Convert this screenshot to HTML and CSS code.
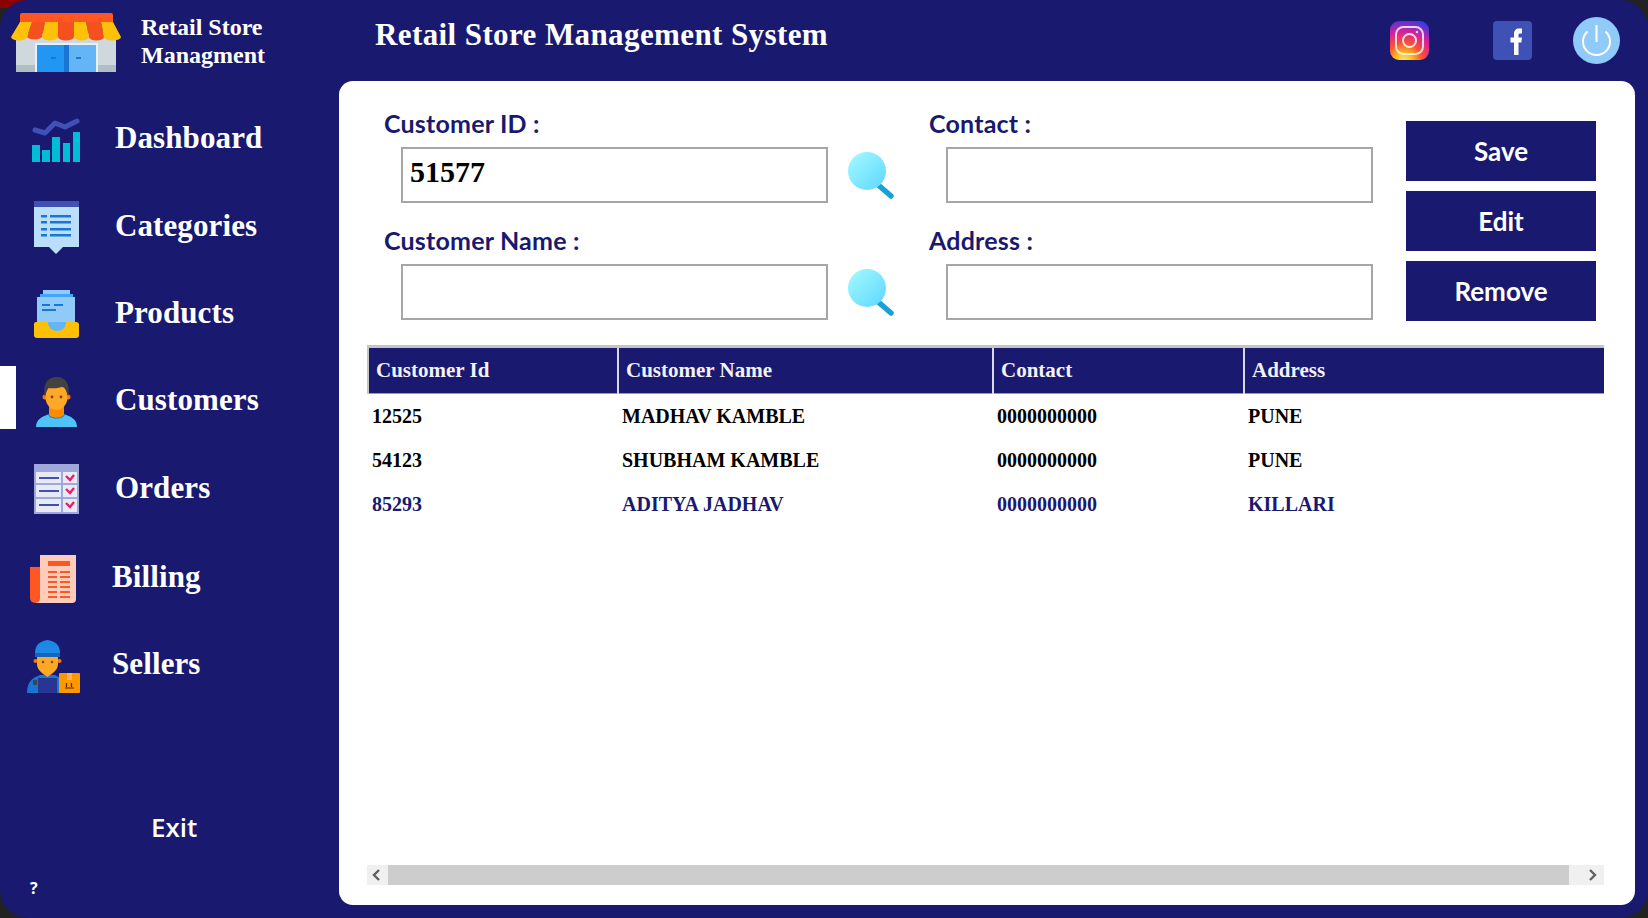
FILE: index.html
```html
<!DOCTYPE html>
<html lang="en">
<head>
  <meta charset="UTF-8" />
  <title>Retail Store Management System</title>
  <link rel="stylesheet" href="styles.css">
</head>
<body>
  <div class="app">

    <!-- SIDEBAR -->
    <aside class="sidebar">
      <div class="brand">
        <svg class="brand-logo" viewBox="0 0 110 59">
          <rect x="5" y="20" width="100" height="39" fill="#cfd8dc"/>
          <rect x="5" y="52" width="100" height="7" fill="#b0bec5"/>
          <rect x="24" y="30" width="63" height="29" fill="#e3f2fd"/>
          <rect x="26" y="32" width="27" height="27" fill="#2196f3"/>
          <rect x="53" y="32" width="32" height="27" fill="#64b5f6"/>
          <rect x="53" y="32" width="5" height="27" fill="#1976d2"/>
          <rect x="40" y="44" width="5" height="2" fill="#1976d2"/>
          <rect x="65" y="44" width="5" height="2" fill="#1976d2"/>
          <path d="M9 9 V2 a2 2 0 0 1 2-2 H100 a2 2 0 0 1 2 2 V9Z" fill="#ff5722"/>
          <path d="M21 9 L16 24 a8 3.5 0 0 0 15 0 L34 9Z" fill="#f4511e"/>
          <path d="M47 9 V24 a8 3.5 0 0 0 16 0 V9Z" fill="#f4511e"/>
          <path d="M75 9 L78 24 a7.5 3.5 0 0 0 15 0 L90 9Z" fill="#f4511e"/>
          <path d="M9 9 L0 24 a8 3.5 0 0 0 16 0 L21 9Z" fill="#ffc107"/>
          <path d="M34 9 L31 24 a8 3.5 0 0 0 16 0 V9Z" fill="#ffc107"/>
          <path d="M63 9 V24 a7.5 3.5 0 0 0 15 0 L75 9Z" fill="#ffc107"/>
          <path d="M90 9 L93 24 a8.5 3.5 0 0 0 17 0 L102 9Z" fill="#ffc107"/>
        </svg>
        <div class="brand-name">Retail Store<br>Managment</div>
      </div>

      <nav class="nav">
        <a class="nav-item">
          <svg class="nav-icon" viewBox="0 0 56 60">
            <g fill="#00bcd4">
              <rect x="4" y="37" width="8" height="17"/>
              <rect x="14" y="42" width="8" height="12"/>
              <rect x="24" y="29" width="8" height="25"/>
              <rect x="35" y="35" width="7" height="19"/>
              <rect x="45" y="24" width="7" height="30"/>
            </g>
            <polyline points="7,22 17,25 27,15 37,19 49,13" fill="none" stroke="#3f51b5" stroke-width="5" stroke-linecap="round" stroke-linejoin="round"/>
          </svg>
          <span>Dashboard</span>
        </a>
        <a class="nav-item">
          <svg class="nav-icon" viewBox="0 0 56 60">
            <path d="M6 6 H51 V52 H35 L28 59 L21 52 H6Z" fill="#bbdefb"/>
            <rect x="6" y="6" width="45" height="6" fill="#3f51b5"/>
            <g fill="#1976d2">
              <rect x="13" y="20" width="6" height="2.5"/><rect x="22" y="20" width="21" height="2.5"/>
              <rect x="13" y="26" width="6" height="2.5"/><rect x="22" y="26" width="21" height="2.5"/>
              <rect x="13" y="33" width="6" height="2.5"/><rect x="22" y="33" width="21" height="2.5"/>
              <rect x="13" y="39" width="6" height="2.5"/><rect x="22" y="39" width="21" height="2.5"/>
            </g>
          </svg>
          <span>Categories</span>
        </a>
        <a class="nav-item">
          <svg class="nav-icon" viewBox="0 0 56 60">
            <rect x="15" y="8" width="27" height="10" fill="#90caf9"/>
            <rect x="12" y="12" width="33" height="10" fill="#42a5f5"/>
            <rect x="9" y="15" width="38" height="27" fill="#90caf9"/>
            <g fill="#1976d2">
              <rect x="14" y="22" width="8" height="2"/><rect x="26" y="22" width="9" height="2"/>
              <rect x="14" y="27" width="14" height="2"/>
            </g>
            <path d="M6 42 a2 2 0 0 1 2-2 H48 a3 3 0 0 1 3 2 V53 a3 3 0 0 1-3 3 H9 a3 3 0 0 1-3-3Z" fill="#ffc107"/>
            <path d="M20 40 H38 V41 a9 8 0 0 1-18 0Z" fill="#64b5f6"/>
          </svg>
          <span>Products</span>
        </a>
        <a class="nav-item nav-item-active">
          <svg class="nav-icon" viewBox="0 0 56 60">
            <path d="M8 57 C8 50 13 47 21 44 H36 C44 47 49 50 49 57Z" fill="#4fc3f7"/>
            <path d="M20 44 H37 C36 50 21 50 20 44Z" fill="#0277bd"/>
            <path d="M21 36 H36 V44 C36 49 21 49 21 44Z" fill="#fb8c00"/>
            <circle cx="17" cy="27" r="2.5" fill="#f57c00"/>
            <circle cx="40" cy="27" r="2.5" fill="#f57c00"/>
            <ellipse cx="28.5" cy="27" rx="11" ry="13" fill="#ffa726"/>
            <path d="M17 27 C14 13 21 7 28 7 C37 6 43 14 40 27 C39 20 37 17 34 17 C28 19 22 18 20 18 C18 20 18 23 17 27Z" fill="#424242"/>
            <circle cx="24" cy="27" r="1.4" fill="#784719"/>
            <circle cx="33" cy="27" r="1.4" fill="#784719"/>
          </svg>
          <span>Customers</span>
        </a>
        <a class="nav-item">
          <svg class="nav-icon" viewBox="0 0 56 60">
            <rect x="6" y="7" width="45" height="50" fill="#9fa8da"/>
            <g fill="#e8eaf6">
              <rect x="8" y="15" width="25" height="11"/><rect x="35" y="15" width="14" height="11"/>
              <rect x="8" y="28" width="25" height="12"/><rect x="35" y="28" width="14" height="12"/>
              <rect x="8" y="42" width="25" height="13"/><rect x="35" y="42" width="14" height="13"/>
            </g>
            <g fill="#3f51b5">
              <rect x="11" y="20" width="20" height="2"/>
              <rect x="11" y="33" width="20" height="2"/>
              <rect x="11" y="47" width="20" height="2"/>
            </g>
            <g fill="none" stroke="#e91e63" stroke-width="2.4">
              <polyline points="38,19 42,23 46,18"/>
              <polyline points="38,32 42,36 46,31"/>
              <polyline points="38,46 42,50 46,45"/>
            </g>
          </svg>
          <span>Orders</span>
        </a>
        <a class="nav-item nav-item-tight">
          <svg class="nav-icon" viewBox="0 0 56 60">
            <path d="M2 22 H14 V58 H7 a5 5 0 0 1-5-5Z" fill="#ff5722"/>
            <path d="M12 10 H48 V54 a4 4 0 0 1-4 4 H8 C12 57 12 54 12 52Z" fill="#ffccbc"/>
            <rect x="20" y="16" width="22" height="5" fill="#ff5722"/>
            <g fill="#ff5722">
              <rect x="20" y="26" width="9" height="2"/><rect x="32" y="26" width="10" height="2"/>
              <rect x="20" y="31" width="9" height="2"/><rect x="32" y="31" width="10" height="2"/>
              <rect x="20" y="36" width="9" height="2"/><rect x="32" y="36" width="10" height="2"/>
              <rect x="20" y="41" width="9" height="2"/><rect x="32" y="41" width="10" height="2"/>
              <rect x="20" y="46" width="9" height="2"/><rect x="32" y="46" width="10" height="2"/>
              <rect x="20" y="51" width="9" height="2"/><rect x="32" y="51" width="10" height="2"/>
            </g>
          </svg>
          <span>Billing</span>
        </a>
        <a class="nav-item nav-item-tight">
          <svg class="nav-icon" viewBox="0 0 56 60">
            <path d="M-1 61 C-1 50 4 46 12 43 H27 C33 45 34 50 34 61Z" fill="#1976d2"/>
            <rect x="10" y="46" width="19" height="15" fill="#283593"/>
            <rect x="5" y="48" width="4" height="5" fill="#37474f"/>
            <circle cx="7.500" cy="29" r="2" fill="#f57c00"/>
            <circle cx="31.500" cy="29" r="2" fill="#f57c00"/>
            <path d="M9 22 H30 V32 C30 38 25 41 19.500 45 C14 41 9 38 9 32Z" fill="#ffa726"/>
            <circle cx="15" cy="30" r="1.300" fill="#784719"/>
            <circle cx="24" cy="30" r="1.300" fill="#784719"/>
            <path d="M7 21 C7 12 13 9 19.500 8 C26 9 32 12 32 21 V25 H7Z" fill="#1e88e5"/>
            <rect x="7" y="21" width="25" height="4" fill="#1565c0"/>
            <rect x="31" y="41" width="21" height="20" rx="1" fill="#ff9800"/>
            <rect x="39" y="41" width="5" height="7" fill="#ffb74d"/>
            <g fill="none" stroke="#4e2c00" stroke-width="1.200">
              <path d="M37 56 H46 M38.500 55 V51 M43.500 55 V51"/>
            </g>
          </svg>
          <span>Sellers</span>
        </a>
      </nav>

      <a class="exit">Exit</a>
      <div class="help">?</div>
    </aside>

    <!-- MAIN -->
    <main class="main">
      <header class="topbar">
        <h1>Retail Store Management System</h1>
        <div class="topbar-icons">
          <svg class="icon-insta" viewBox="0 0 39 39">
            <defs>
              <radialGradient id="instaGrad" cx="35%" cy="105%" r="110%">
                <stop offset="0" stop-color="#ffe9a0"/>
                <stop offset="0.2" stop-color="#ffc21a"/>
                <stop offset="0.45" stop-color="#fb4f35"/>
                <stop offset="0.72" stop-color="#d3209f"/>
                <stop offset="1" stop-color="#3f38e0"/>
              </radialGradient>
            </defs>
            <rect width="39" height="39" rx="9" fill="url(#instaGrad)"/>
            <rect x="6" y="6" width="27" height="27" rx="7.500" fill="none" stroke="#fff" stroke-opacity=".8" stroke-width="2"/>
            <circle cx="19.500" cy="19.500" r="6.500" fill="none" stroke="#fff" stroke-opacity=".85" stroke-width="2"/>
            <circle cx="27" cy="11" r="1.300" fill="#fff" fill-opacity=".8"/>
          </svg>
          <svg class="icon-fb" viewBox="0 0 39 39">
            <rect width="39" height="39" rx="4" fill="#3f51b5"/>
            <path d="M21 34 V21.500 H17.500 V16.500 H21 V13 C21 9.500 23 7.500 26 7.500 H29 V12.500 H27 C26 12.500 25.500 13 25.500 14 V16.500 H29 L28.300 21.500 H25.500 V34Z" fill="#fff"/>
          </svg>
          <svg class="icon-power" viewBox="0 0 47 47">
            <circle cx="23.500" cy="23.500" r="23.500" fill="#90caf9"/>
            <path d="M14.500 14.500 A13.500 13.500 0 1 0 32.500 14.500" fill="none" stroke="#fff" stroke-width="2"/>
            <path d="M23.500 8 V25" fill="none" stroke="#fff" stroke-width="2"/>
          </svg>
        </div>
      </header>

      <section class="panel">
        <div class="panel-top">
          <form class="fields">
            <div class="field">
              <label>Customer ID :</label>
              <div class="field-row">
                <input type="text" class="input" value="51577" />
                <svg class="search-icon" viewBox="0 0 48 48">
                  <defs>
                    <linearGradient id="lens" x1="0" y1="0" x2="1" y2="1">
                      <stop offset="0" stop-color="#a6fbff"/>
                      <stop offset="1" stop-color="#5cd6ff"/>
                    </linearGradient>
                  </defs>
                  <path d="M29 31 L44 44" stroke="#1a9fd8" stroke-width="5.500" stroke-linecap="round"/>
                  <circle cx="20" cy="19" r="19" fill="url(#lens)"/>
                </svg>
              </div>
            </div>
            <div class="field">
              <label>Contact :</label>
              <div class="field-row">
                <input type="text" class="input" />
              </div>
            </div>
            <div class="field">
              <label>Customer Name :</label>
              <div class="field-row">
                <input type="text" class="input" />
                <svg class="search-icon" viewBox="0 0 48 48">
                  <path d="M29 31 L44 44" stroke="#1a9fd8" stroke-width="5.500" stroke-linecap="round"/>
                  <circle cx="20" cy="19" r="19" fill="url(#lens)"/>
                </svg>
              </div>
            </div>
            <div class="field">
              <label>Address :</label>
              <div class="field-row">
                <input type="text" class="input" />
              </div>
            </div>
          </form>

          <div class="actions">
            <button type="button">Save</button>
            <button type="button">Edit</button>
            <button type="button">Remove</button>
          </div>
        </div>

        <div class="table-wrap">
          <table class="grid">
            <thead>
              <tr>
                <th class="col-id">Customer Id</th>
                <th class="col-name">Customer Name</th>
                <th class="col-contact">Contact</th>
                <th>Address</th>
              </tr>
            </thead>
            <tbody>
              <tr>
                <td>12525</td><td>MADHAV KAMBLE</td><td>0000000000</td><td>PUNE</td>
              </tr>
              <tr>
                <td>54123</td><td>SHUBHAM KAMBLE</td><td>0000000000</td><td>PUNE</td>
              </tr>
              <tr class="row-selected">
                <td>85293</td><td>ADITYA JADHAV</td><td>0000000000</td><td>KILLARI</td>
              </tr>
            </tbody>
          </table>
        </div>

        <div class="scrollbar">
          <div class="scroll-btn">
            <svg viewBox="0 0 10 12"><polyline points="8,1 3,6 8,11" fill="none" stroke="#606060" stroke-width="2.400"/></svg>
          </div>
          <div class="scroll-thumb"></div>
          <div class="scroll-btn scroll-btn-right">
            <svg viewBox="0 0 10 12"><polyline points="2,1 7,6 2,11" fill="none" stroke="#606060" stroke-width="2.400"/></svg>
          </div>
        </div>
      </section>
    </main>
  </div>
</body>
</html>
```

FILE: styles.css
```css
* {
  box-sizing: border-box;
}

body {
  margin: 0;
  width: 1648px;
  height: 918px;
  overflow: hidden;
  background: linear-gradient(#8b0000, #8b0000) no-repeat 0 0 / 60px 8px, #222;
  font-family: "Liberation Serif", serif;
}

.app {
  display: grid;
  grid-template-columns: 339px 1fr;
  height: 918px;
  background: #191970;
  border-radius: 28px;
  overflow: hidden;
  color: white;
}

/* sidebar */
.sidebar {
  display: flex;
  flex-direction: column;
}

.brand {
  display: flex;
  align-items: center;
  height: 81px;
  padding: 0 0 0 11px;
}

.brand-logo {
  width: 110px;
  height: 59px;
  margin: 3px 0 0 0;
  flex: none;
}

.brand-name {
  margin: 0 0 0 20px;
  font-size: 24px;
  font-weight: bold;
  line-height: 28px;
}

.nav {
  padding-top: 13px;
}

.nav-item {
  position: relative;
  display: flex;
  align-items: center;
  gap: 31px;
  height: 87.4px;
  padding-left: 28px;
  font-size: 31px;
  letter-spacing: 0.1px;
  font-weight: bold;
}

.nav-item span {
  padding-top: 1px;
}

.nav-item-tight {
  gap: 28px;
}

.nav-item-tight span {
  padding-top: 4px;
}

.nav-item-active::before {
  content: "";
  position: absolute;
  left: 0;
  top: 10px;
  width: 16px;
  height: 63px;
  background: white;
}

.nav-icon {
  width: 56px;
  height: 60px;
  flex: none;
  overflow: visible;
}

.exit {
  margin-top: 104px;
  padding-left: 151px;
  font-family: "Open Sans", sans-serif;
  font-size: 26px;
  font-weight: 600;
  line-height: 34px;
}

.help {
  margin-top: 33px;
  padding-left: 30px;
  font-family: "Open Sans", sans-serif;
  font-size: 16px;
  font-weight: 700;
  line-height: 22px;
}

/* top bar */
.main {
  display: flex;
  flex-direction: column;
  min-width: 0;
  padding: 0 13px 13px 0;
}

.topbar {
  display: flex;
  align-items: center;
  flex: none;
  height: 81px;
  padding: 0 15px 0 36px;
}

.topbar h1 {
  margin: -11px 0 0 0;
  font-size: 31px;
  letter-spacing: 0.4px;
  font-weight: bold;
}

.topbar-icons {
  display: flex;
  align-items: center;
  margin-left: auto;
}

.icon-insta {
  width: 39px;
  height: 39px;
  margin-right: 64px;
}

.icon-fb {
  width: 39px;
  height: 39px;
  margin-right: 41px;
}

.icon-power {
  width: 47px;
  height: 47px;
}

/* panel */
.panel {
  flex: 1;
  display: flex;
  flex-direction: column;
  min-height: 0;
  padding: 27px 31px 20px 28px;
  background: white;
  border-radius: 14px;
}

.panel-top {
  display: flex;
  flex: none;
  padding-left: 17px;
}

.fields {
  display: grid;
  grid-template-columns: 545px 477px;
  row-gap: 21px;
}

.field label {
  display: block;
  height: 30px;
  margin-bottom: 9px;
  color: #191970;
  font-family: Lato, sans-serif;
  font-size: 25px;
  letter-spacing: 0.2px;
  font-weight: 700;
  line-height: 30px;
}

.field-row {
  display: flex;
  padding-left: 17px;
}

.input {
  width: 427px;
  height: 56px;
  padding: 0 0 6px 7px;
  border: 2px solid #a6a6a6;
  border-radius: 0;
  background: white;
  color: black;
  font-family: "Liberation Serif", serif;
  font-size: 30px;
  font-weight: bold;
}

.search-icon {
  width: 48px;
  height: 48px;
  margin: 5px 0 0 19px;
  flex: none;
}

.actions {
  display: flex;
  flex-direction: column;
  gap: 10px;
  margin-top: 13px;
}

.actions button {
  width: 190px;
  height: 60px;
  padding: 0;
  border: none;
  background: #191970;
  color: white;
  font-family: Lato, sans-serif;
  font-size: 26px;
  font-weight: 700;
}

/* table */
.table-wrap {
  flex: 1;
  min-height: 0;
  margin-top: 24px;
}

.grid {
  width: 100%;
  table-layout: fixed;
  border-collapse: collapse;
  border-top: 3px solid #c4c4c4;
}

.grid th {
  height: 47px;
  padding: 0 0 0 7px;
  border-right: 2px solid #d8d8e8;
  border-bottom: 1px solid #9a9ab8;
  background: #191970;
  color: #f2f2f8;
  font-size: 21px;
  font-weight: bold;
  text-align: left;
}

.grid th:first-child {
  border-left: 2px solid #c4c4c4;
}

.grid th:last-child {
  border-right: none;
}

.col-id {
  width: 250px;
}

.col-name {
  width: 375px;
}

.col-contact {
  width: 251px;
}

.grid td {
  height: 44px;
  padding: 2px 0 0 4px;
  color: black;
  font-size: 20px;
  font-weight: bold;
}

.row-selected td {
  color: #191970;
}

.scrollbar {
  display: flex;
  flex: none;
  height: 20px;
  background: #f0f0f0;
}

.scroll-btn {
  display: flex;
  align-items: center;
  justify-content: center;
  width: 21px;
  padding-right: 3px;
}

.scroll-btn svg {
  width: 10px;
  height: 12px;
}

.scroll-btn-right {
  width: 35px;
  padding: 0 0 0 13px;
}

.scroll-thumb {
  flex: 1;
  background: #cdcdcd;
}
```
